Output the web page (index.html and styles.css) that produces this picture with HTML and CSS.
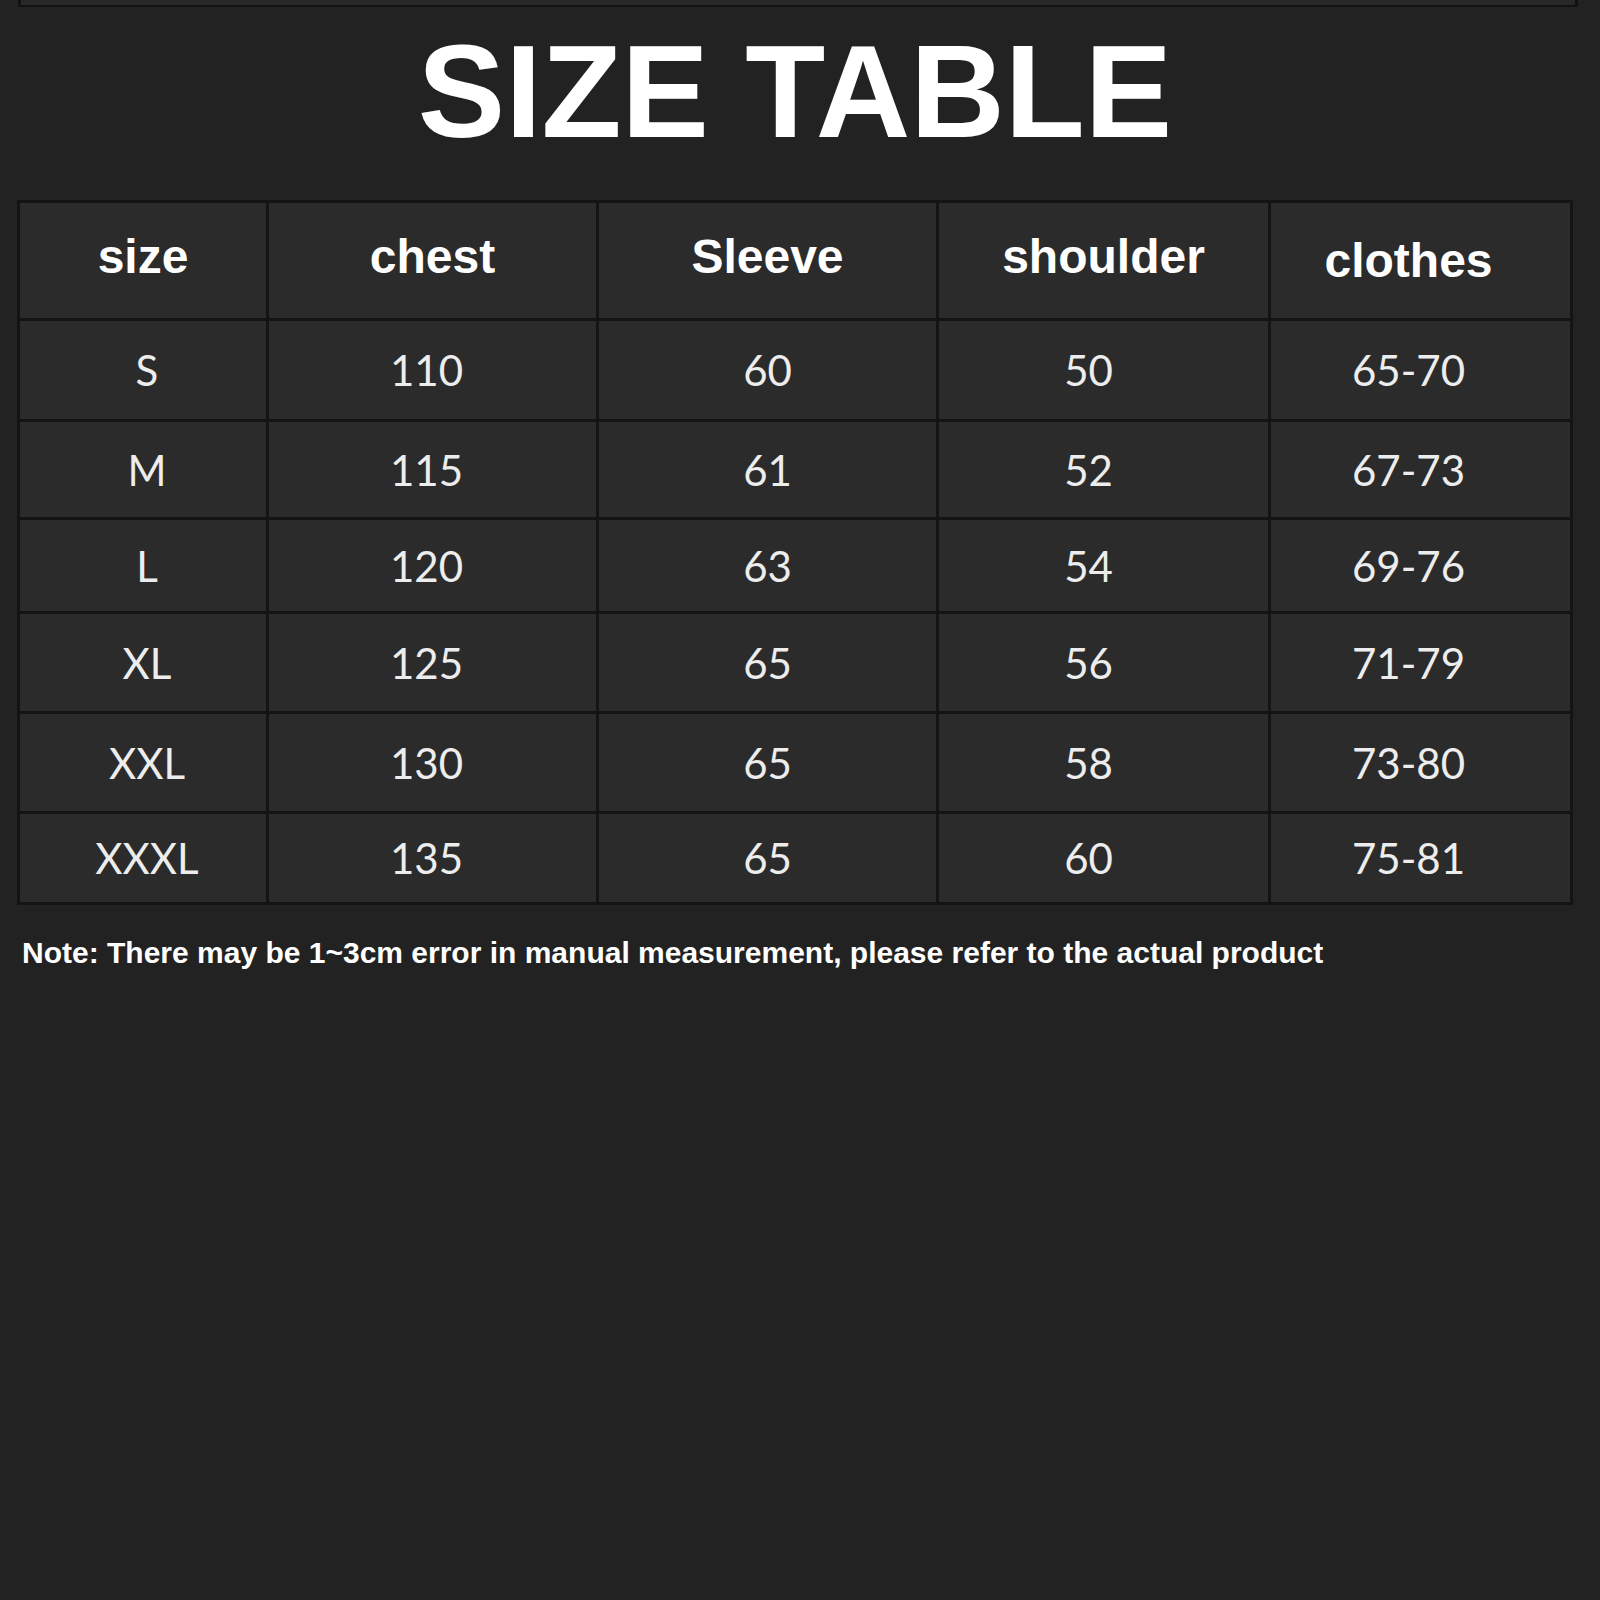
FILE: index.html
```html
<!DOCTYPE html>
<html lang="en">
<head>
<meta charset="utf-8">
<title>Size Table</title>
<link rel="stylesheet" href="styles.css">
</head>
<body>
<div class="page">
  <div class="stub"></div>
  <h1 class="title">SIZE TABLE</h1>
  <div class="table">
    <div class="cell head">size</div>
    <div class="cell head">chest</div>
    <div class="cell head">Sleeve</div>
    <div class="cell head">shoulder</div>
    <div class="cell head low cl">clothes</div>

    <div class="cell sz">S</div><div class="cell ch">110</div><div class="cell">60</div><div class="cell sh">50</div><div class="cell cl">65-70</div>
    <div class="cell sz">M</div><div class="cell ch">115</div><div class="cell">61</div><div class="cell sh">52</div><div class="cell cl">67-73</div>
    <div class="cell sz">L</div><div class="cell ch">120</div><div class="cell">63</div><div class="cell sh">54</div><div class="cell cl">69-76</div>
    <div class="cell sz">XL</div><div class="cell ch">125</div><div class="cell">65</div><div class="cell sh">56</div><div class="cell cl">71-79</div>
    <div class="cell sz">XXL</div><div class="cell ch">130</div><div class="cell">65</div><div class="cell sh">58</div><div class="cell cl">73-80</div>
    <div class="cell sz">XXXL</div><div class="cell ch">135</div><div class="cell">65</div><div class="cell sh">60</div><div class="cell cl">75-81</div>
  </div>
  <p class="note">Note: There may be 1~3cm error in manual measurement, please refer to the actual product</p>
</div>
</body>
</html>
```
FILE: styles.css
```css
html, body {
  margin: 0;
  padding: 0;
  background: #222222;
}
body {
  width: 1600px;
  height: 1600px;
  overflow: hidden;
}
.page {
  width: 1556px;
  padding-left: 17px;
}
.stub {
  margin-left: 1px;
  width: 1554px;
  height: 5px;
  background: #282828;
  border-left: 3px solid #121212;
  border-right: 3px solid #121212;
  border-bottom: 2px solid #121212;
  box-sizing: content-box;
}
.title {
  margin: 19px 0 0 0;
  height: 174px;
  font-family: "Liberation Sans", Arial, sans-serif;
  font-weight: 700;
  font-size: 131px;
  line-height: 131px;
  color: #ffffff;
  text-align: center;
}
.table {
  display: grid;
  grid-template-columns: 246px 327px 337px 329px 299px;
  grid-template-rows: 115px 98px 95px 91px 97px 97px 88px;
  gap: 3px;
  padding: 3px;
  background: #141414;
  width: 1556px;
  box-sizing: border-box;
}
.cell {
  background: #2b2b2b;
  display: flex;
  align-items: center;
  justify-content: center;
  font-family: Lato, "Open Sans", sans-serif;
  font-size: 42px;
  color: #ededed;
}
.cell.head {
  font-family: "Liberation Sans", Arial, sans-serif;
  font-weight: 700;
  font-size: 48px;
  color: #ffffff;
  padding-bottom: 8px;
}
.cell.head.low {
  padding-bottom: 0;
}
.cell.sz {
  padding-left: 8px;
}
.cell.ch {
  padding-right: 12px;
}
.cell.sh {
  padding-right: 30px;
}
.cell.cl {
  padding-right: 24px;
}
.note {
  margin: 31px 0 0 5px;
  font-family: "Liberation Sans", Arial, sans-serif;
  font-weight: 700;
  font-size: 30px;
  line-height: 34px;
  color: #ffffff;
  white-space: nowrap;
}
```
